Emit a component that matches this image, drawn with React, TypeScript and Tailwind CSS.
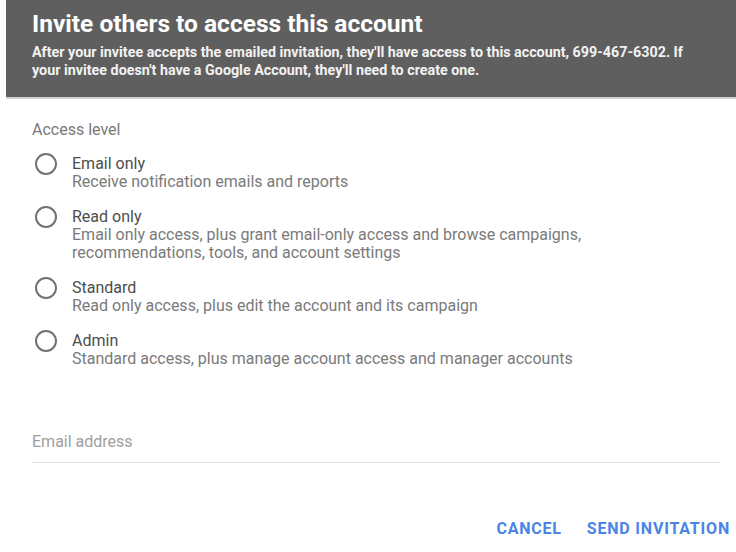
import { useState } from "react";

type Level = {
  id: string;
  title: string;
  lines: string[];
};

const LEVELS: Level[] = [
  {
    id: "email",
    title: "Email only",
    lines: ["Receive notification emails and reports"],
  },
  {
    id: "read",
    title: "Read only",
    lines: [
      "Email only access, plus grant email-only access and browse campaigns,",
      "recommendations, tools, and account settings",
    ],
  },
  {
    id: "standard",
    title: "Standard",
    lines: ["Read only access, plus edit the account and its campaign"],
  },
  {
    id: "admin",
    title: "Admin",
    lines: ["Standard access, plus manage account access and manager accounts"],
  },
];

export default function App() {
  const [level, setLevel] = useState<string | null>(null);
  const [email, setEmail] = useState("");

  return (
    <div className="min-h-[552px] w-[736px] bg-white pl-[6px] font-['Roboto',sans-serif]">
      <header className="border-b-2 border-[#d4d4d4] bg-[#5f5f5f] pt-[10px] pb-[18px] pl-[26px] pr-[10px] text-white">
        <h1 className="text-[24.5px] font-bold leading-[28px]">
          Invite others to access this account
        </h1>
        <p className="mt-[5px] whitespace-nowrap text-[14.3px] font-bold leading-[18px] text-[#f2f2f2]">
          After your invitee accepts the emailed invitation, they'll have access to this account, 699-467-6302. If
          <br />
          your invitee doesn't have a Google Account, they'll need to create one.
        </p>
      </header>

      <div className="pl-[26px] pr-[16px]">
        <div className="mt-[22px] text-[16px] leading-[18px] text-[#7a7a7a]">Access level</div>

        <div className="mt-[16px] flex flex-col gap-[17px]">
          {LEVELS.map((l) => (
            <label key={l.id} className="flex cursor-pointer items-start">
              <input
                type="radio"
                name="level"
                className="sr-only"
                checked={level === l.id}
                onChange={() => setLevel(l.id)}
              />
              <span className="ml-[3px] -mt-[2px] grid h-[22px] w-[22px] flex-none place-items-center rounded-full border-2 border-[#727272]">
                {level === l.id && <span className="h-[10px] w-[10px] rounded-full bg-[#4285f4]" />}
              </span>
              <span className="ml-[15px] text-[16px] leading-[18px]">
                <span className="block text-[#4d4d4d]">{l.title}</span>
                {l.lines.map((line) => (
                  <span key={line} className="block whitespace-nowrap text-[#7a7a7a]">
                    {line}
                  </span>
                ))}
              </span>
            </label>
          ))}
        </div>

        <div className="mt-[65px] border-b border-[#e0e0e0] pb-[11px]">
          <input
            type="email"
            value={email}
            onChange={(e) => setEmail(e.target.value)}
            placeholder="Email address"
            className="block w-full bg-transparent text-[16px] leading-[18px] text-[#424242] outline-none placeholder:text-[#9e9e9e]"
          />
        </div>
      </div>

      <div className="mt-[57px] flex justify-end gap-[25px] pr-[6px]">
        <button type="button" className="text-[16px] font-bold uppercase leading-[18px] tracking-[0.05em] text-[#4a84e6]">
          Cancel
        </button>
        <button type="button" className="text-[16px] font-bold uppercase leading-[18px] tracking-[0.05em] text-[#4a84e6]">
          Send invitation
        </button>
      </div>
    </div>
  );
}
